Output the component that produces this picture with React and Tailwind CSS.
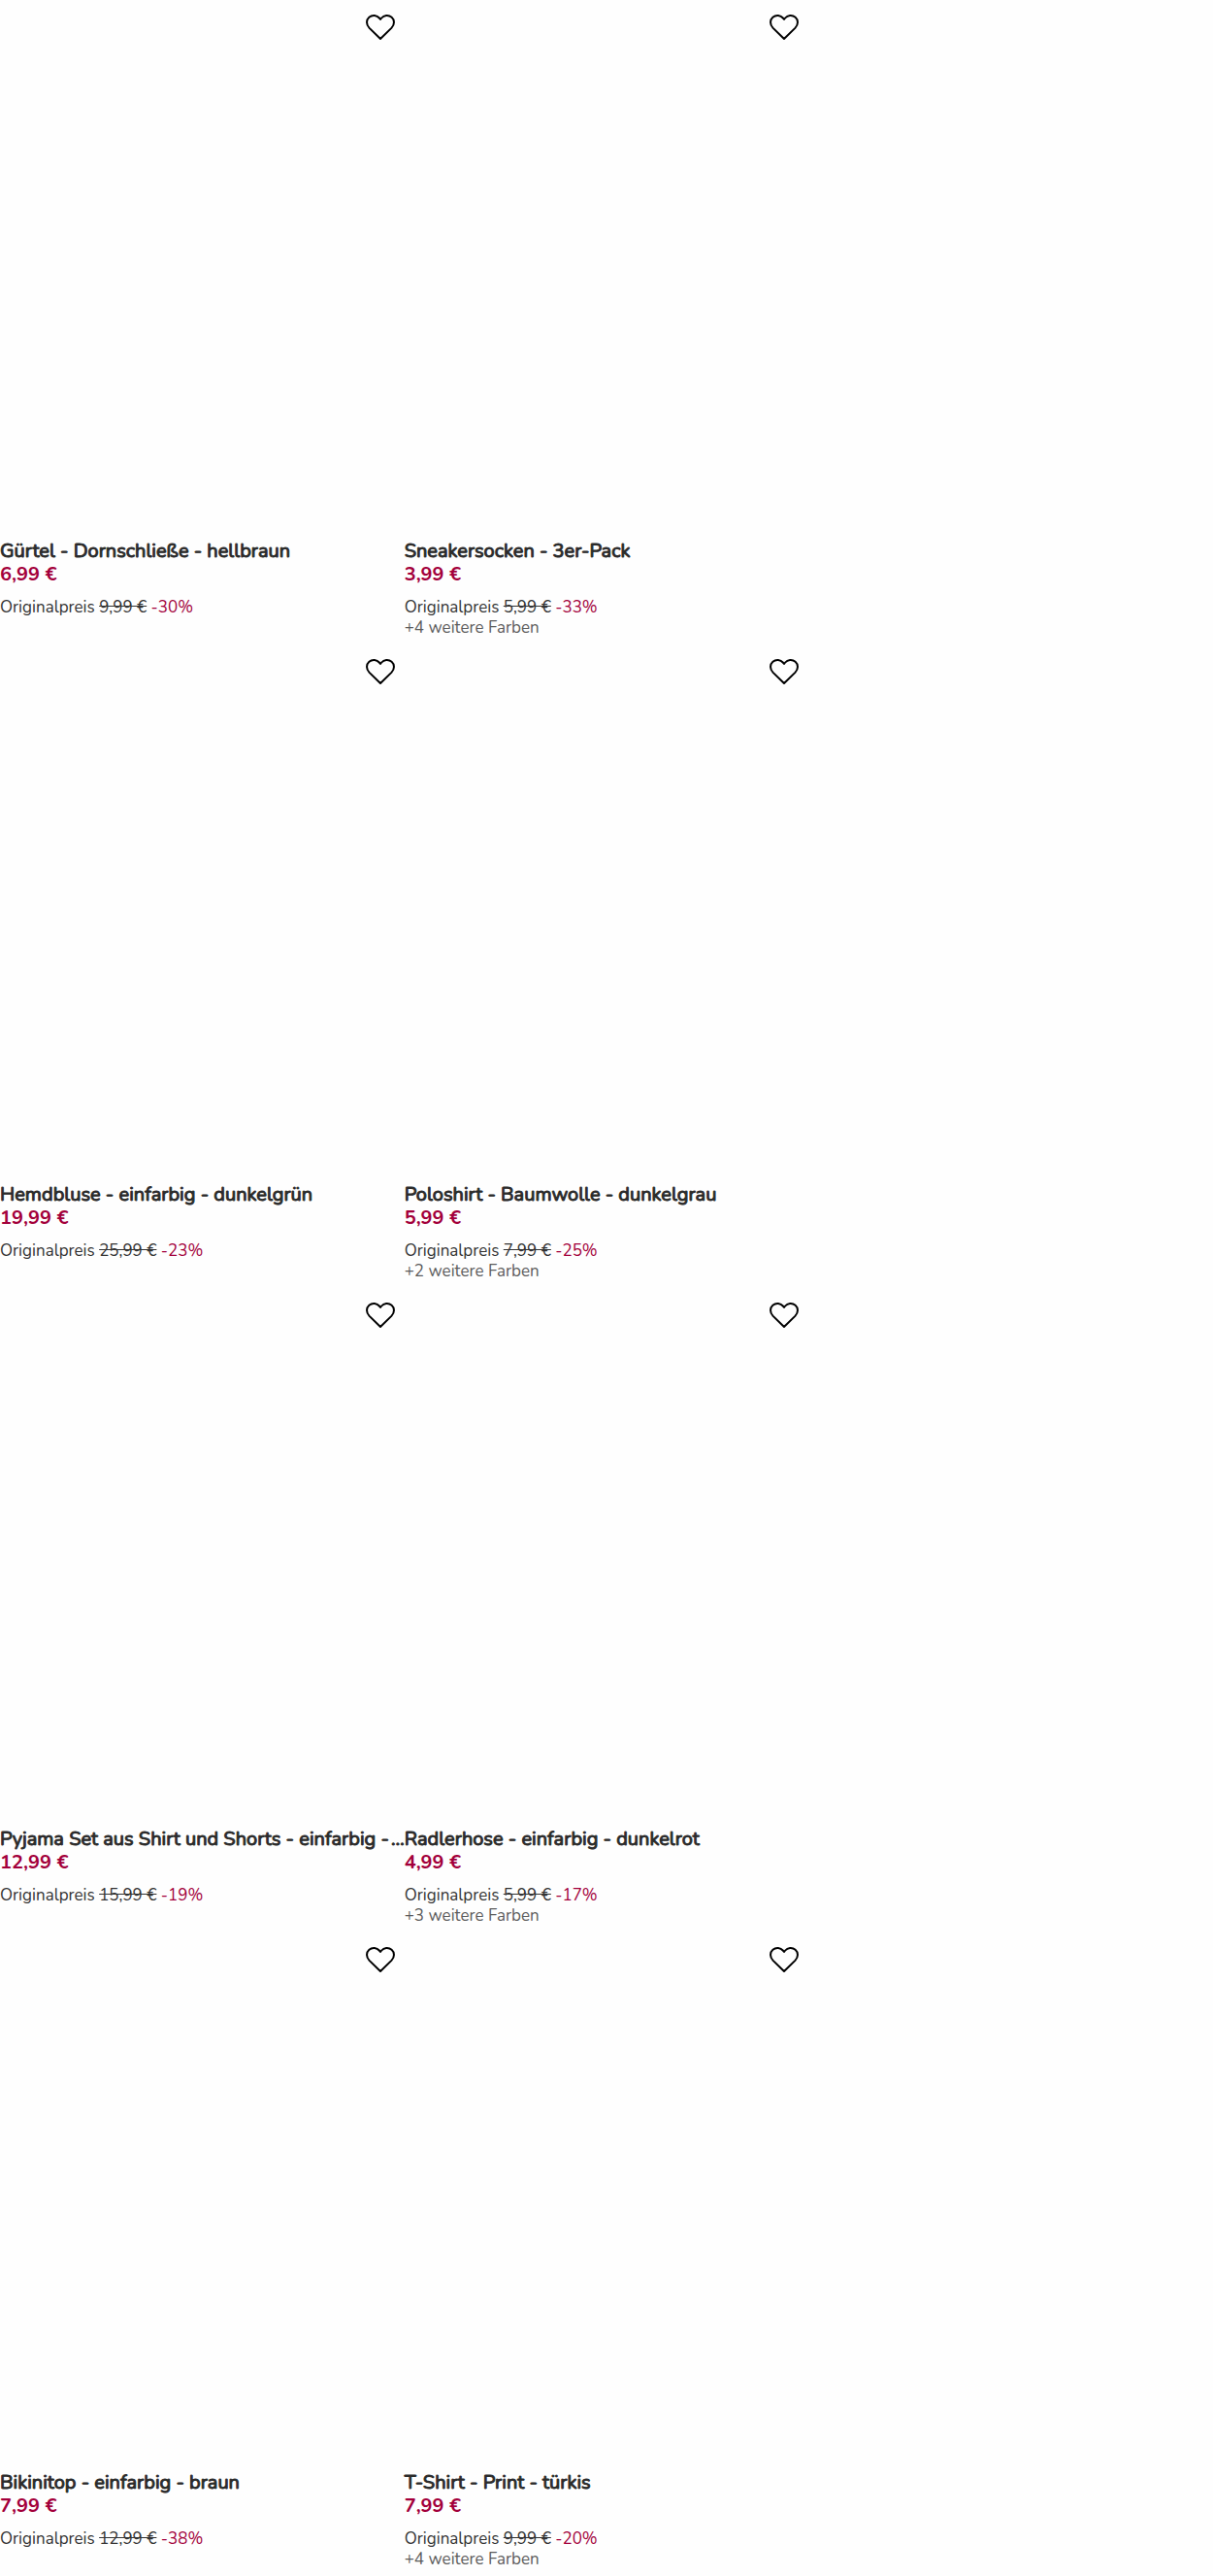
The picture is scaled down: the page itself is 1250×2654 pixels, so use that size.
import React, { useState } from 'react';
import clsx from 'clsx';

const products = [
  { id: 1, name: 'Gürtel - Dornschließe - hellbraun', price: '6,99 €', original: '9,99 €', discount: '-30%' },
  { id: 2, name: 'Sneakersocken - 3er-Pack', price: '3,99 €', original: '5,99 €', discount: '-33%', colors: 4 },
  { id: 3, name: 'Hemdbluse - einfarbig - dunkelgrün', price: '19,99 €', original: '25,99 €', discount: '-23%' },
  { id: 4, name: 'Poloshirt - Baumwolle - dunkelgrau', price: '5,99 €', original: '7,99 €', discount: '-25%', colors: 2 },
  { id: 5, name: 'Pyjama Set aus Shirt und Shorts - einfarbig -\u200a…', price: '12,99 €', original: '15,99 €', discount: '-19%' },
  { id: 6, name: 'Radlerhose - einfarbig - dunkelrot', price: '4,99 €', original: '5,99 €', discount: '-17%', colors: 3 },
  { id: 7, name: 'Bikinitop - einfarbig - braun', price: '7,99 €', original: '12,99 €', discount: '-38%' },
  { id: 8, name: 'T-Shirt - Print - türkis', price: '7,99 €', original: '9,99 €', discount: '-20%', colors: 4 },
];

const HeartIcon = ({ filled }) => (
  <svg viewBox="0 0 32 28" className={clsx('h-7 w-8', filled ? 'fill-black' : 'fill-none')} stroke="currentColor" strokeWidth="2" strokeLinejoin="round" aria-hidden="true">
    <path d="M16 26 L4.6 14.9 C1.2 11.4 1.2 6.4 4.4 3.7 C7.7 0.9 12.4 1.6 14.8 4.5 L16 6 L17.2 4.5 C19.6 1.6 24.3 0.9 27.6 3.7 C30.8 6.4 30.8 11.4 27.4 14.9 Z" />
  </svg>
);

const ProductCard = ({ product }) => {
  const [liked, setLiked] = useState(false);

  return (
    <article className="relative min-w-0 pb-[7px]">
      {/* Image area */}
      <div className="aspect-3/4" />
      <button
        type="button"
        aria-label="Merken"
        aria-pressed={liked}
        onClick={() => setLiked(!liked)}
        className="absolute top-0 right-px flex h-14 w-12 cursor-pointer items-center justify-center text-black"
      >
        <HeartIcon filled={liked} />
      </button>

      <h2 className="text-[20px] leading-6 font-normal whitespace-nowrap text-[#2b2b2b] [-webkit-text-stroke:1px_#2b2b2b]">
        <a href="#">{product.name}</a>
      </h2>
      <p className="text-[20px] leading-6 font-bold text-[#a3003b]">{product.price}</p>
      <p className="mt-[11px] text-[17px] leading-[21px] text-[#333333]">
        Originalpreis <s>{product.original}</s> <span className="text-[#a3003b]">{product.discount}</span>
      </p>
      {product.colors && (
        <p className="text-[17px] leading-[21px] text-[#5c5c5c]">+{product.colors} weitere Farben</p>
      )}
    </article>
  );
};

const App = () => (
  <main className="w-full bg-[#fefefe] font-['Nunito','Lato',sans-serif]">
    <div className="grid w-2/3 grid-cols-2">
      {products.map((product) => (
        <ProductCard key={product.id} product={product} />
      ))}
    </div>
  </main>
);

export default App;
